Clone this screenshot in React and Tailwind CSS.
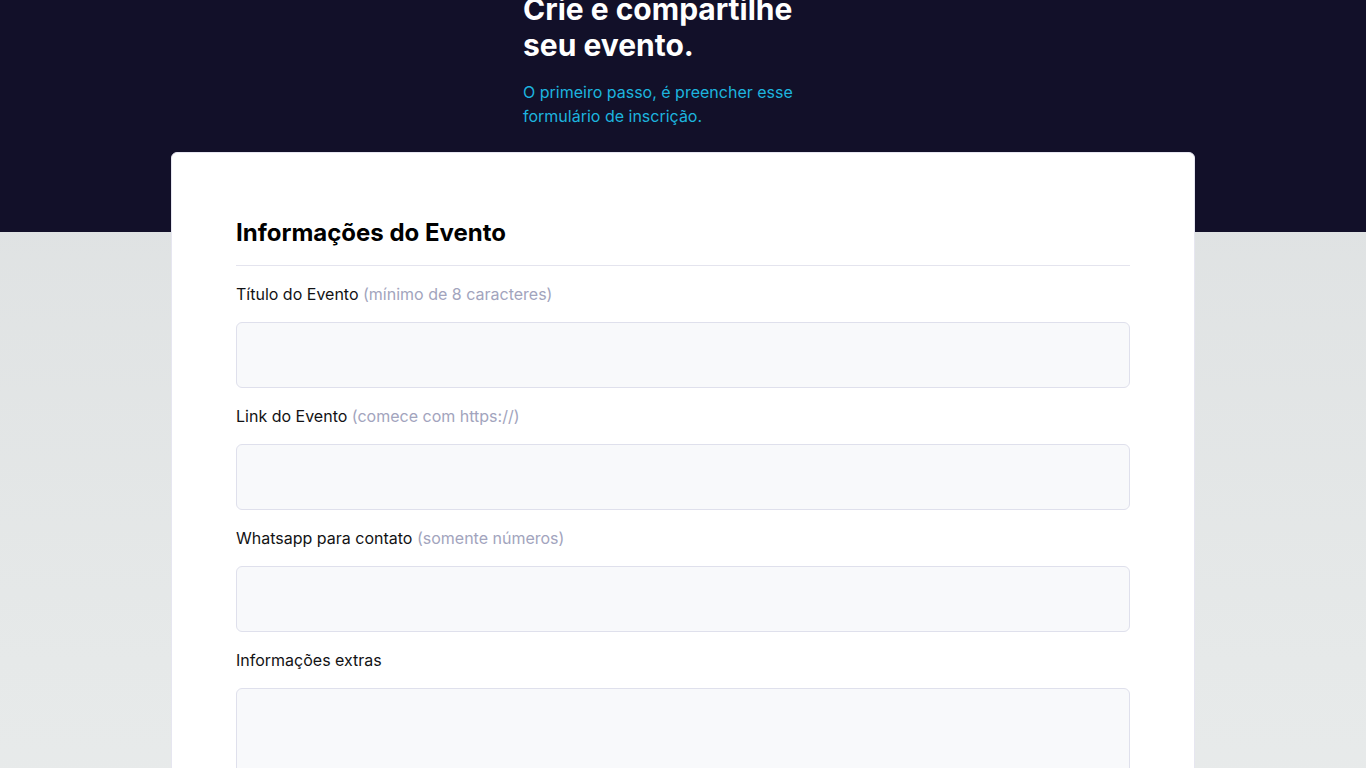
/*
 * Página de inscrição de evento — cabeçalho escuro + cartão de formulário
 */

const campos = [
  { label: 'Título do Evento', dica: '(mínimo de 8 caracteres)' },
  { label: 'Link do Evento', dica: '(comece com https://)' },
  { label: 'Whatsapp para contato', dica: '(somente números)' },
]

function Campo({ label, dica, alto }) {
  return (
    <div className="mb-4">
      <label className="block mb-4 text-base leading-6 text-[#121214]">
        {label}
        {dica && <span className="text-[#a2a4bd]"> {dica}</span>}
      </label>
      {alto ? (
        <textarea className="block w-full h-40 rounded-md border border-[#dfe0ec] bg-[#f8f9fb] resize-none outline-none" />
      ) : (
        <input
          type="text"
          className="block w-full h-[66px] rounded-md border border-[#dfe0ec] bg-[#f8f9fb] outline-none"
        />
      )}
    </div>
  )
}

export default function App() {
  return (
    <div className="w-screen min-h-screen font-['Inter',sans-serif] bg-gradient-to-b from-[#dcdfe0] via-[#e6e9e9] to-[#eef0f0]">
      {/* cabeçalho */}
      <header className="bg-[#121029] pb-[104px]">
        <div className="w-80 mx-auto">
          <h1 className="-mt-[9px] text-3xl font-bold text-white">
            Crie e compartilhe seu evento.
          </h1>
          <p className="mt-[17px] text-base leading-6 text-[#1db4df]">
            O primeiro passo, é preencher esse formulário de inscrição.
          </p>
        </div>
      </header>

      {/* cartão do formulário */}
      <main className="max-w-[1024px] mx-auto -mt-20 pb-20">
        <div className="bg-white rounded-md border border-[#e6e6f0] px-16 pt-16 pb-16">
          <h2 className="text-2xl font-bold text-black pb-4 border-b border-[#e4e4ee]">
            Informações do Evento
          </h2>
          <div className="mt-4">
            {campos.map((c) => (
              <Campo key={c.label} {...c} />
            ))}
            <Campo label="Informações extras" alto />
          </div>

          <h2 className="mt-12 text-2xl font-bold text-black pb-4 border-b border-[#e4e4ee]">
            Data e horário
          </h2>
          <div className="mt-4 grid grid-cols-2 gap-6">
            <Campo label="Data de início" />
            <Campo label="Horário" />
          </div>

          <button
            type="button"
            className="mt-8 w-full h-16 rounded-md bg-[#1db4df] text-white font-bold"
          >
            Enviar inscrição
          </button>
        </div>
      </main>
    </div>
  )
}
